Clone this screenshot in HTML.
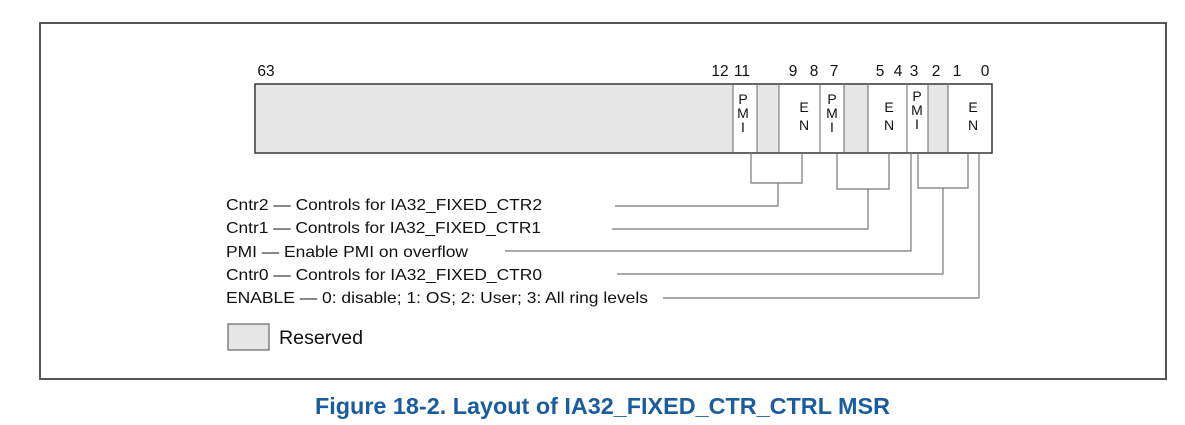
<!DOCTYPE html>
<html><head><meta charset="utf-8"><style>
html,body{margin:0;padding:0;background:#fff;}
svg{display:block;}
text{font-family:"Liberation Sans",Arial,sans-serif;fill:#111;}
</style></head><body>
<svg width="1185" height="425" viewBox="0 0 1185 425" xmlns="http://www.w3.org/2000/svg">
<rect x="40" y="23" width="1126" height="356" fill="#fff" stroke="#555" stroke-width="2"/>
<rect x="255" y="84" width="737" height="69" fill="#fff" stroke="#333" stroke-width="1.5"/>
<rect x="256" y="85" width="477" height="67" fill="#e6e6e6"/>
<rect x="757" y="85" width="22" height="67" fill="#e6e6e6"/>
<rect x="844" y="85" width="24" height="67" fill="#e6e6e6"/>
<rect x="928" y="85" width="20" height="67" fill="#e6e6e6"/>
<g stroke="#666" stroke-width="1">
<line x1="733" y1="84" x2="733" y2="153"/>
<line x1="757" y1="84" x2="757" y2="153"/>
<line x1="779" y1="84" x2="779" y2="153"/>
<line x1="820" y1="84" x2="820" y2="153"/>
<line x1="844" y1="84" x2="844" y2="153"/>
<line x1="868" y1="84" x2="868" y2="153"/>
<line x1="907" y1="84" x2="907" y2="153"/>
<line x1="928" y1="84" x2="928" y2="153"/>
<line x1="948" y1="84" x2="948" y2="153"/>
</g>
<g font-size="15.5" text-anchor="middle">
<text x="266" y="76">63</text>
<text x="720" y="76">12</text><text x="742" y="76">11</text>
<text x="793" y="76">9</text><text x="814" y="76">8</text><text x="834" y="76">7</text>
<text x="880" y="76">5</text><text x="898" y="76">4</text><text x="914" y="76">3</text>
<text x="936" y="76">2</text><text x="957" y="76">1</text><text x="985" y="76">0</text>
</g>
<g font-size="14" text-anchor="middle">
<text x="743" y="104">P</text><text x="743" y="118">M</text><text x="743" y="132">I</text>
<text x="832" y="104">P</text><text x="832" y="118">M</text><text x="832" y="132">I</text>
<text x="917" y="101">P</text><text x="917" y="115">M</text><text x="917" y="129">I</text>
<text x="804" y="112">E</text><text x="804" y="130">N</text>
<text x="889" y="112">E</text><text x="889" y="130">N</text>
<text x="973" y="112">E</text><text x="973" y="130">N</text>
</g>
<g stroke="#777" stroke-width="1.2" fill="none">
<polyline points="751,153 751,183 802,183 802,153"/>
<polyline points="778,183 778,206 615,206"/>
<polyline points="837,153 837,189 889,189 889,153"/>
<polyline points="868,189 868,229 612,229"/>
<polyline points="911,153 911,251 505,251"/>
<polyline points="918,153 918,188 968,188 968,153"/>
<polyline points="943,188 943,274 617,274"/>
<polyline points="979,153 979,298 663,298"/>
</g>
<g font-size="16" lengthAdjust="spacingAndGlyphs">
<text x="226" y="210" textLength="316" lengthAdjust="spacingAndGlyphs">Cntr2 — Controls for IA32_FIXED_CTR2</text>
<text x="226" y="233" textLength="315" lengthAdjust="spacingAndGlyphs">Cntr1 — Controls for IA32_FIXED_CTR1</text>
<text x="226" y="257" textLength="242" lengthAdjust="spacingAndGlyphs">PMI — Enable PMI on overflow</text>
<text x="226" y="280" textLength="316" lengthAdjust="spacingAndGlyphs">Cntr0 — Controls for IA32_FIXED_CTR0</text>
<text x="226" y="303" textLength="422" lengthAdjust="spacingAndGlyphs">ENABLE — 0: disable; 1: OS; 2: User; 3: All ring levels</text>
</g>
<rect x="228" y="324" width="41" height="26" fill="#e6e6e6" stroke="#666" stroke-width="1.2"/>
<text x="279" y="344" font-size="19" textLength="84" lengthAdjust="spacingAndGlyphs">Reserved</text>
<text x="315" y="414" font-size="23" font-weight="bold" style="fill:#1a5c9e" textLength="575" lengthAdjust="spacingAndGlyphs">Figure 18-2.  Layout of IA32_FIXED_CTR_CTRL MSR</text>
</svg>
</body></html>
